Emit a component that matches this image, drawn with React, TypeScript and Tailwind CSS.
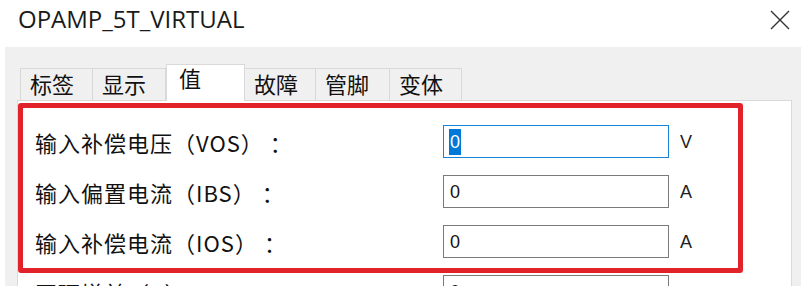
import React from "react";

const tabs = ["标签", "显示", "值", "故障", "管脚", "变体"];
const tabWidths = [73, 74, 79, 72, 75, 73];

const rows = [
  { label: "输入补偿电压（VOS）", unit: "V", active: true },
  { label: "输入偏置电流（IBS）", unit: "A" },
  { label: "输入补偿电流（IOS）", unit: "A" },
  { label: "开环增益（A）", unit: "" },
];

export default function App() {
  const cjk = { fontFamily: '"Noto Sans CJK SC", "Noto Sans", sans-serif' };
  return (
    <div className="w-[801px] h-[286px] bg-white overflow-hidden flex flex-col">
      <div className="h-[47px] shrink-0 flex items-center justify-between pl-[18px] pr-[10px]">
        <span
          className="text-[24px] text-[#1a1a1a] leading-none mt-[-10px]"
          style={{ fontFamily: '"Open Sans", "Noto Sans", sans-serif' }}
        >
          OPAMP_5T_VIRTUAL
        </span>
        <svg width="22" height="22" viewBox="0 0 22 22" className="mt-[-8px]">
          <path d="M2 2 L20 20 M20 2 L2 20" stroke="#333" strokeWidth="1.4" fill="none" />
        </svg>
      </div>
      <div className="ml-[5px] flex-1 bg-[#f0f0f0] pl-[12px] pr-[9px] pt-[16px] flex flex-col">
        <div className="flex items-end pl-[3px] h-[37px] relative z-10" style={cjk}>
          {tabs.map((t, i) => {
            const sel = i === 2;
            return (
              <div
                key={t}
                style={{ width: tabWidths[i] }}
                className={
                  sel
                    ? "h-[37px] bg-white border border-[#d9d9d9] border-b-0 -mb-[1px] text-[22px] leading-none text-[#111] pl-[12px] pt-[1px]"
                    : "h-[32px] bg-[#f0f0f0] border border-[#d9d9d9] border-b-0 -ml-px first:ml-0 text-[22px] leading-none text-[#111] pl-[9px] pt-[3px]"
                }
              >
                {t}
              </div>
            );
          })}
        </div>
        <div className="flex-1 bg-white border border-[#d9d9d9] relative">
          <div className="flex flex-col gap-[17px] pt-[24px]">
            {rows.map((r) => (
              <div key={r.label} className="flex items-center h-[33px]">
                <div
                  className="w-[425px] pl-[17px] text-[22px] tracking-[1px] text-[#111] leading-none flex"
                  style={cjk}
                >
                  <span>{r.label}</span>
                  <span className="ml-[6px]">：</span>
                </div>
                <div
                  className={
                    r.active
                      ? "w-[226px] h-[33px] border border-[#1883d7] flex items-center pl-[5px]"
                      : "w-[226px] h-[33px] border border-[#7a7a7a] flex items-center pl-[5px]"
                  }
                >
                  <span
                    className={
                      r.active
                        ? "bg-[#0078d7] text-white text-[18px] leading-[26px] px-[1px]"
                        : "text-[#111] text-[18px] leading-[26px] px-[1px]"
                    }
                    style={{ fontFamily: '"Liberation Sans", Arial, sans-serif' }}
                  >
                    0
                  </span>
                </div>
                <div
                  className="pl-[11px] text-[18px] text-[#222] leading-none"
                  style={{ fontFamily: '"Liberation Sans", Arial, sans-serif' }}
                >
                  {r.unit}
                </div>
              </div>
            ))}
          </div>
          <div className="absolute left-0 top-[2px] w-[725px] h-[170px] border-[5px] border-[#e2222a] rounded-[3px] pointer-events-none" />
        </div>
      </div>
    </div>
  );
}
